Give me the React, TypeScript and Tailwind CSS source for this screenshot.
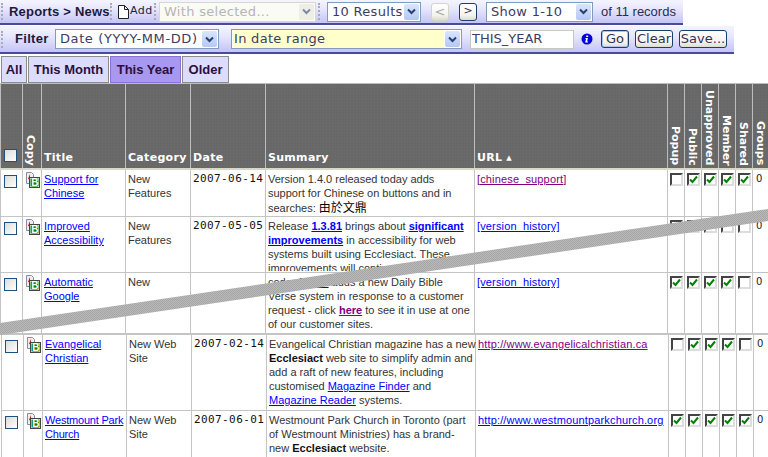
import React from "react";

const gradient = "bg-[linear-gradient(#f4f4ff,#e6e6fc_40%,#c4c4f6)]";

const Grip = () => <div className="h-[17px] border-l-2 border-dotted border-[#a9a9b9]" />;

const Chevron = () => (
  <svg width="9" height="7" viewBox="0 0 9 7" fill="none" stroke="#27406f" strokeWidth="2">
    <path d="M1 1.5l3.5 3.5L8 1.5" />
  </svg>
);

const Select = ({
  label,
  className,
  disabled,
  yellow,
}: {
  label: string;
  className: string;
  disabled?: boolean;
  yellow?: boolean;
}) => (
  <div
    className={`flex h-[20px] items-center border border-solid pl-[4px] pr-px text-[13px] tracking-[0.3px] ${
      disabled ? "border-[#d8d8cc] bg-[#fbfbf6] text-[#b5b5b5]" : "border-[#7f9db9] bg-white text-[#3c3c60]"
    } ${className}`}
  >
    <span className={`flex h-full flex-1 items-center whitespace-pre ${yellow ? "-ml-[3px] bg-[#ffffcc] pl-[1px]" : ""}`}>{label}</span>
    <span
      className={`ml-px flex h-[16px] w-[15px] items-center justify-center rounded-[2px] ${
        disabled ? "bg-[#e6e6dc] opacity-60" : "bg-[linear-gradient(#dbe5fb,#b4c8f4)]"
      }`}
    >
      <Chevron />
    </span>
  </div>
);

const Btn = ({ label, className }: { label: string; className: string }) => (
  <div
    className={`flex h-[18px] items-center justify-center rounded-[3px] border border-solid border-[#1c3f6a] bg-[linear-gradient(#ffffff,#f4f4ee_70%,#dcdccf)] text-[13px] text-[#333355] ${className}`}
  >
    {label}
  </div>
);

const Toolbars = () => (
  <>
    <div className={`flex h-[25px] w-[683px] items-center border-b-2 border-solid border-[#4a4a9a] ${gradient}`}>
      <div className="ml-[1px] mr-[6px]">
        <Grip />
      </div>
      <span className="w-[100px] whitespace-nowrap font-['Liberation_Sans',sans-serif] text-[13px] font-bold tracking-[0.2px] text-[#1a1a40]">
        Reports &gt; News
      </span>
      <div className="ml-[1px] mr-[5px]">
        <Grip />
      </div>
      <svg width="12" height="14" viewBox="0 0 12 14" fill="#fff" stroke="#222" className="mr-px">
        <path d="M1.5.5h6l4 4v9h-10zM7.5.5v4h4" />
      </svg>
      <span className="w-[24px] text-[11px] tracking-[0.5px] text-[#222244]">Add</span>
      <Grip />
      <Select label="With selected..." disabled className="ml-[3px] w-[157px]" />
      <div className="mx-[2px]">
        <Grip />
      </div>
      <Select label="10 Results" className="ml-[5px] w-[94px]" />
      <Btn label="<" className="ml-[10px] w-[18px] border-[#d4d4c8] text-[#aaa]" />
      <Btn label=">" className="ml-[10px] w-[18px] !text-[11px]" />
      <Select label="Show 1-10" className="ml-[9px] w-[107px]" />
      <span className="ml-[8px] whitespace-nowrap font-['Liberation_Sans',sans-serif] text-[13px] text-[#2b2b55]">of 11 records</span>
    </div>
    <div className={`mt-px flex h-[28px] w-[734px] items-center border-b-2 border-solid border-[#4a4a9a] ${gradient}`}>
      <div className="ml-[1px] mr-[12px]">
        <Grip />
      </div>
      <span className="w-[40px] font-['Liberation_Sans',sans-serif] text-[13px] font-bold tracking-[0.3px] text-[#1a1a40]">Filter</span>
      <Select label="Date (YYYY-MM-DD)" className="w-[164px] !tracking-[0.6px]" />
      <Select label="In date range" yellow className="ml-[12px] w-[231px]" />
      <div className="ml-[8px] flex h-[19px] w-[104px] items-center border border-solid border-[#c8c8c0] bg-white pl-[1px] text-[13px] text-[#3c3c60]">
        THIS_YEAR
      </div>
      <svg width="12" height="12" viewBox="0 0 12 12" className="ml-[7px]">
        <circle cx="6" cy="6" r="5.5" fill="#0000dd" />
        <path d="M5.2 2.6h2v1.5h-2zM4.6 5h2.3l-.7 3.4h.9l-.2 1H4.2l.7-3.5h-.5z" fill="#fff" />
      </svg>
      <Btn label="Go" className="ml-[8px] w-[28px] shadow-[inset_0_0_0_1px_#a8c4ee]" />
      <Btn label="Clear" className="ml-[6px] w-[38px]" />
      <Btn label="Save..." className="ml-[6px] w-[48px]" />
    </div>
  </>
);

const tabs = [
  { label: "All", w: "w-[26px]" },
  { label: "This Month", w: "w-[81px]" },
  { label: "This Year", w: "w-[71px]", active: true },
  { label: "Older", w: "w-[47px]" },
];

const Tabs = () => (
  <div className="flex h-[29px] items-start gap-px pl-px pt-[2px]">
    {tabs.map((t) => (
      <div
        key={t.label}
        className={`flex h-[27px] items-center justify-center border border-solid font-['Liberation_Sans',sans-serif] text-[13px] font-bold text-[#2a1040] ${t.w} ${
          t.active ? "border-[#8a70d8] bg-[#a898f0]" : "border-[#8c8c8c] bg-[#dcdcff]"
        }`}
      >
        {t.label}
      </div>
    ))}
  </div>
);

const MainCheck = () => (
  <div className="mt-[5px] ml-[3px] h-[13px] w-[13px] border border-solid border-[#1c5180] bg-[linear-gradient(135deg,#dcdcd6,#ffffff)]" />
);

const Tick = ({ on }: { on: boolean }) => (
  <div className="mt-[3px] ml-[2px] flex h-[13px] w-[13px] items-center justify-center border-2 border-solid border-t-[#444] border-l-[#444] border-r-[#ddd] border-b-[#ddd] bg-white">
    {on && (
      <svg width="9" height="9" viewBox="0 0 9 9" fill="none" stroke="#008000" strokeWidth="2">
        <path d="M1 4.5L3.5 7 8 1.5" />
      </svg>
    )}
  </div>
);

const CopyIcon = () => (
  <svg width="16" height="16" viewBox="0 0 16 16" className="mt-[2px] ml-[2px]">
    <path d="M1.5.5h5l2 2v9h-7z" fill="#eee" stroke="#8a8aa0" />
    <path d="M5 2l-2 5 2 .5z" fill="#ee0000" />
    <rect x="4.5" y="5.5" width="10" height="10" fill="#fff" stroke="#444" />
    <rect x="5.5" y="6.5" width="8" height="8" fill="#008000" />
    <text x="6.2" y="14" fontFamily="'Liberation Sans', sans-serif" fontWeight="bold" fontSize="10" fill="#fff">
      B
    </text>
  </svg>
);

const A = ({ children, bold, visited }: { children: React.ReactNode; bold?: boolean; visited?: boolean }) => (
  <a className={`underline ${visited ? "text-[#800080]" : "text-[#0000ff]"} ${bold ? "font-bold" : ""}`}>{children}</a>
);

type Row = {
  h: string;
  title: React.ReactNode;
  category: React.ReactNode;
  date: string;
  summary: React.ReactNode;
  summaryClip?: string;
  url: React.ReactNode;
  flags: boolean[];
};

const topRows: Row[] = [
  {
    h: "h-[48px]",
    title: <A>Support for Chinese</A>,
    category: "New Features",
    date: "2007-06-14",
    summary: (
      <>
        Version 1.4.0 released today adds support for Chinese on buttons and in searches:{" "}
        <span className="font-['Noto_Sans_CJK_TC',sans-serif] text-[12px] text-black">由於文鼎</span>
      </>
    ),
    url: <A visited>[chinese_support]</A>,
    flags: [false, true, true, true, true],
  },
  {
    h: "h-[56px]",
    title: <A>Improved Accessibility</A>,
    category: "New Features",
    date: "2007-05-05",
    summary: (
      <>
        Release <A bold>1.3.81</A> brings about <A bold>significant improvements</A> in accessibility for web systems
        built using Ecclesiact. These improvements will continue
      </>
    ),
    summaryClip: "h-[54px] overflow-hidden",
    url: <A>[version_history]</A>,
    flags: [true, true, false, false, false],
  },
  {
    h: "h-[61px]",
    title: <A>Automatic Google</A>,
    category: "New",
    date: "",
    summary: (
      <>
        code. <A bold>1.3.80</A> adds a new Daily Bible
        <br />
        Verse system in response to a customer
        <br />
        request - click{" "}
        <A bold visited>
          here
        </A>{" "}
        to see it in use at one
        <br />
        of our customer sites.
      </>
    ),
    summaryClip: "whitespace-nowrap",
    url: <A>[version_history]</A>,
    flags: [true, true, true, true, false],
  },
];

const bottomRows: Row[] = [
  {
    h: "h-[76px]",
    title: <A>Evangelical Christian</A>,
    category: "New Web Site",
    date: "2007-02-14",
    summary: (
      <>
        Evangelical Christian magazine has a new
        <br />
        <b className="text-[#111]">Ecclesiact</b> web site to simplify admin and
        <br />
        add a raft of new features, including
        <br />
        customised <A>Magazine Finder</A> and
        <br />
        <A>Magazine Reader</A> systems.
      </>
    ),
    summaryClip: "whitespace-nowrap",
    url: <A visited>http://www.evangelicalchristian.ca</A>,
    flags: [false, true, true, true, false],
  },
  {
    h: "h-[47px]",
    title: (
      <span className="whitespace-nowrap tracking-[-0.2px]">
        <A>Westmount Park</A>
        <br />
        <A>Church</A>
      </span>
    ),
    category: "New Web Site",
    date: "2007-06-01",
    summary: (
      <>
        Westmount Park Church in Toronto (part
        <br />
        of Westmount Ministries) has a brand-
        <br />
        new <b className="text-[#111]">Ecclesiact</b> website.
      </>
    ),
    summaryClip: "whitespace-nowrap",
    url: <A>http://www.westmountparkchurch.org</A>,
    flags: [true, true, true, true, true],
  },
];

const Cols = () => (
  <colgroup>
    <col className="w-[22px]" />
    <col className="w-[19px]" />
    <col className="w-[84px]" />
    <col className="w-[65px]" />
    <col className="w-[75px]" />
    <col className="w-[209px]" />
    <col className="w-[193px]" />
    <col className="w-[17px]" />
    <col className="w-[17px]" />
    <col className="w-[17px]" />
    <col className="w-[17px]" />
    <col className="w-[17px]" />
    <col className="w-[16px]" />
  </colgroup>
);

const td = "border border-solid border-[#c4c4c4] p-0 align-top";
const txt = "pl-[2px] pt-[2px] font-['Liberation_Sans',sans-serif] text-[11px] leading-[14px] text-[#333]";

const Rows = ({ rows }: { rows: Row[] }) => (
  <>
    {rows.map((r, i) => (
      <tr key={i} className={r.h}>
        <td className={td}>
          <MainCheck />
        </td>
        <td className={td}>
          <CopyIcon />
        </td>
        <td className={td}>
          <div className={txt}>{r.title}</div>
        </td>
        <td className={td}>
          <div className={txt}>{r.category}</div>
        </td>
        <td className={td}>
          <div className="whitespace-nowrap px-[2px] pt-[2px] font-['DejaVu_Sans_Mono',monospace] text-[11px] leading-[14px] tracking-[0.4px] text-[#111]">
            {r.date}
          </div>
        </td>
        <td className={td}>
          <div className={`${txt} ${r.summaryClip ?? ""}`}>{r.summary}</div>
        </td>
        <td className={td}>
          <div className={`${txt} whitespace-nowrap tracking-[0.15px]`}>{r.url}</div>
        </td>
        {r.flags.map((f, j) => (
          <td key={j} className={td}>
            <Tick on={f} />
          </td>
        ))}
        <td className={td}>
          <div className="pl-[3px] pt-[2px] text-[10px] leading-[14px] text-[#222]">0</div>
        </td>
      </tr>
    ))}
  </>
);

const headBg =
  "bg-[#6a6a6a] bg-[radial-gradient(#5e5e5e_1px,transparent_1px)] bg-[length:3px_3px] border border-solid border-[#bcbcbc] border-b-[#d8d8c8] border-b-2 p-0 align-bottom text-white";

const Wide = ({ label, sorted }: { label: string; sorted?: boolean }) => (
  <th className={`${headBg} px-[2px] pb-[1px] text-left font-['DejaVu_Sans',sans-serif] text-[11px] font-bold tracking-[0.3px]`}>
    {label}
    {sorted && <span className="ml-[4px] align-[1px] text-[7px]">▲</span>}
  </th>
);

const Tall = ({ label }: { label: string }) => (
  <th className={headBg}>
    <div className="mx-auto block w-[14px] pb-[2px] text-right font-['DejaVu_Sans',sans-serif] text-[11px] font-bold leading-[14px] [writing-mode:vertical-rl]">
      {label}
    </div>
  </th>
);

const table = "w-[768px] table-fixed border-collapse";

const NewsTable = () => (
  <>
    <table className={table}>
      <Cols />
      <thead>
        <tr className="h-[85px]">
          <th className={headBg}>
            <div className="mb-[6px] ml-[3px] h-[13px] w-[13px] border border-solid border-[#1c5180] bg-[linear-gradient(135deg,#dcdcd6,#ffffff)]" />
          </th>
          <Tall label="Copy" />
          <Wide label="Title" />
          <Wide label="Category" />
          <Wide label="Date" />
          <Wide label="Summary" />
          <Wide label="URL" sorted />
          <Tall label="Popup" />
          <Tall label="Public" />
          <Tall label="Unapproved" />
          <Tall label="Member" />
          <Tall label="Shared" />
          <Tall label="Groups" />
        </tr>
      </thead>
      <tbody>
        <Rows rows={topRows} />
      </tbody>
    </table>
    <table className={`${table} ml-px`}>
      <Cols />
      <tbody>
        <Rows rows={bottomRows} />
      </tbody>
    </table>
  </>
);

// the grey strip where the long screenshot was cut
const TornStrip = () => (
  <svg width="768" height="457" className="absolute left-0 top-0">
    <defs>
      <pattern id="dither" width="2" height="2" patternUnits="userSpaceOnUse">
        <rect width="2" height="2" fill="#b9b9b9" />
        <rect width="1" height="1" fill="#a6a6a6" />
        <rect x="1" y="1" width="1" height="1" fill="#a6a6a6" />
      </pattern>
    </defs>
    <polygon points="0,323 768,209 768,221 0,335" fill="url(#dither)" />
  </svg>
);

export default function App() {
  return (
    <div className="relative h-[457px] w-[768px] overflow-hidden bg-white font-['DejaVu_Sans',sans-serif]">
      <Toolbars />
      <Tabs />
      <NewsTable />
      <TornStrip />
    </div>
  );
}
